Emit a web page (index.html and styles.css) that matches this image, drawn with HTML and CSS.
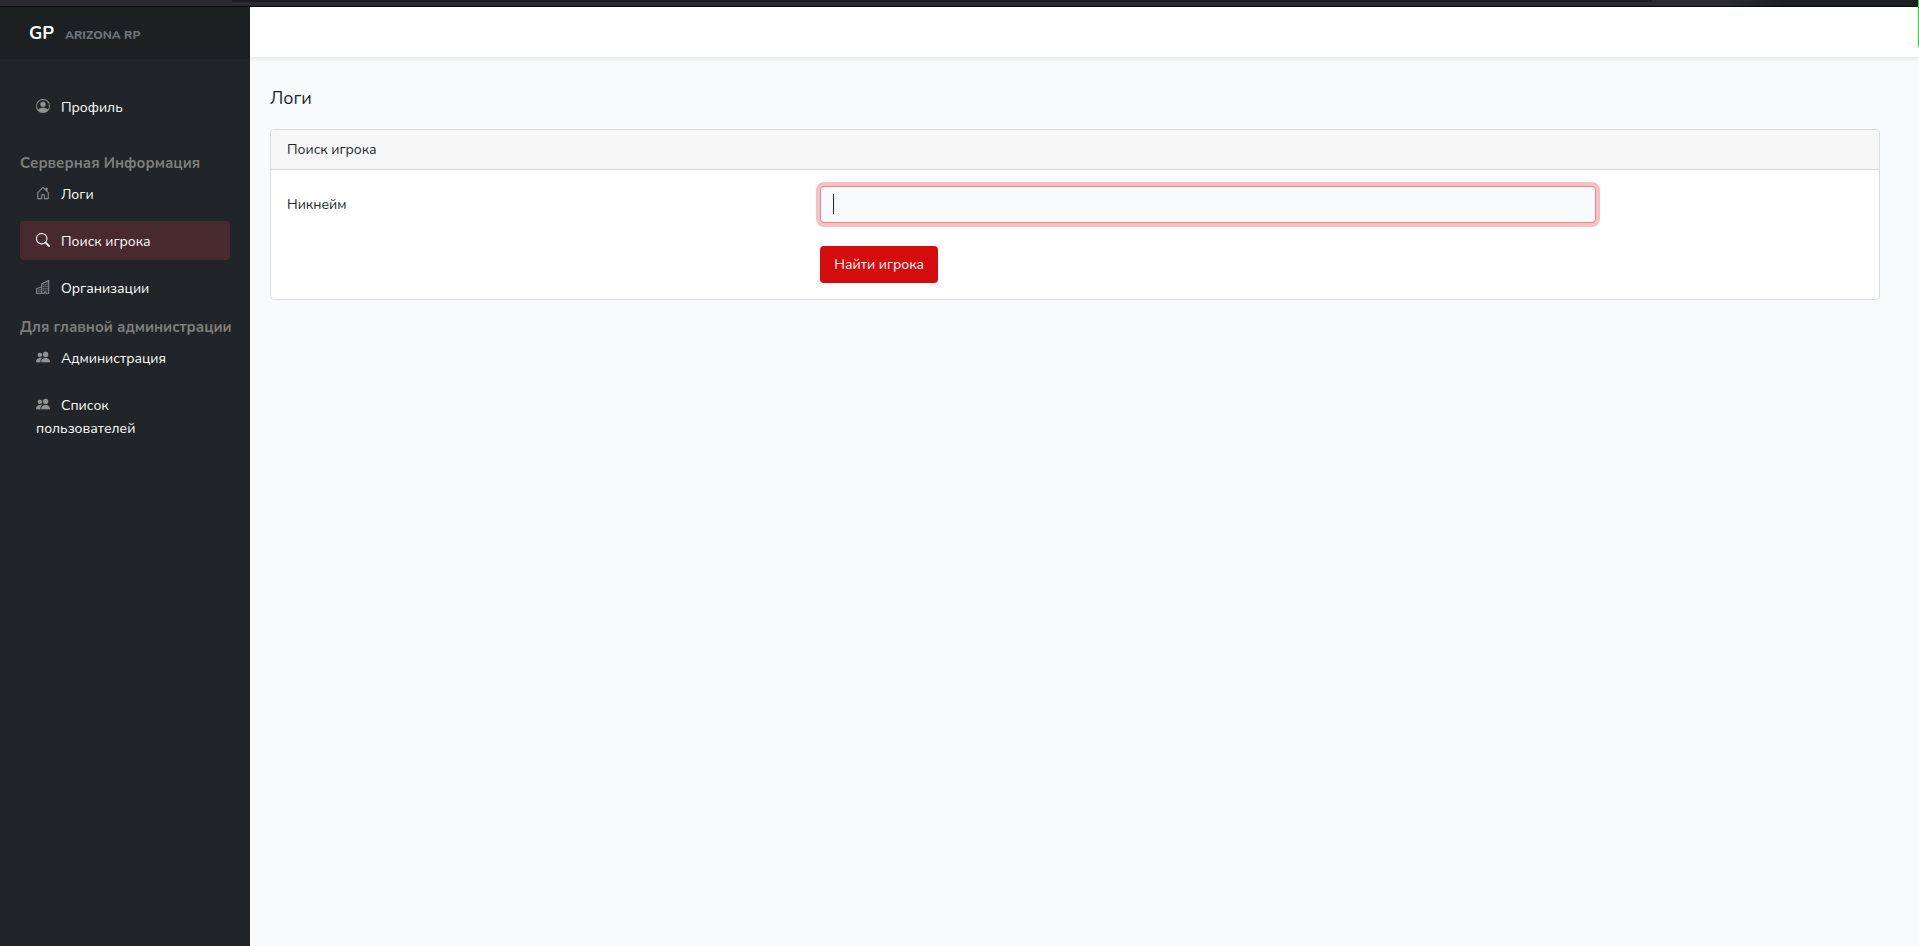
FILE: index.html
```
<!DOCTYPE html>
<html lang="ru">
<head>
    <meta charset="UTF-8">
    <meta name="viewport" content="width=device-width, initial-scale=1.0">
    <title>Логи</title>
    <link rel="stylesheet" href="styles.css">
</head>
<body>
    <div class="window-bar">
        <div class="window-tabs"></div>
    </div>
    <div class="window-edge"></div>

    <div class="layout">
        <aside class="sidebar">
            <a class="sidebar-brand" href="/">
                <span class="brand-name">GP</span>
                <span class="brand-server">ARIZONA RP</span>
            </a>
            <nav class="sidebar-nav">
                <a class="nav-link nav-profile" href="/profile"><svg class="nav-icon" viewBox="0 0 16 16"><path d="M11 6a3 3 0 1 1-6 0 3 3 0 0 1 6 0z"/><path fill-rule="evenodd" d="M0 8a8 8 0 1 1 16 0A8 8 0 0 1 0 8zm8-7a7 7 0 0 0-5.468 11.37C3.242 11.226 4.805 10 8 10s4.757 1.225 5.468 2.37A7 7 0 0 0 8 1z"/></svg>Профиль</a>

                <div class="nav-title">Серверная Информация</div>
                <a class="nav-link" href="/logs"><svg class="nav-icon" viewBox="0 0 16 16"><path fill-rule="evenodd" d="M7.646 1.146a.5.5 0 0 1 .708 0l6 6a.5.5 0 0 1 .146.354v7a.5.5 0 0 1-.5.5H9.500a.5.5 0 0 1-.5-.5v-4H7v4a.5.5 0 0 1-.5.5H2a.5.5 0 0 1-.5-.5v-7a.5.5 0 0 1 .146-.354l6-6zM2.500 7.707V14H6v-4a.5.5 0 0 1 .5-.5h3a.5.5 0 0 1 .5.5v4h3.500V7.707L8 2.207l-5.500 5.500z"/><path fill-rule="evenodd" d="M13 2.500V6l-2-2V2.500a.5.5 0 0 1 .5-.5h1a.5.5 0 0 1 .5.5z"/></svg>Логи</a>
                <a class="nav-link active" href="/search"><svg class="nav-icon" viewBox="0 0 16 16"><path d="M11.742 10.344a6.500 6.500 0 1 0-1.397 1.398h-.001c.03.04.062.078.098.115l3.850 3.850a1 1 0 0 0 1.415-1.414l-3.850-3.850a1.007 1.007 0 0 0-.115-.1zM12 6.500a5.500 5.500 0 1 1-11 0 5.500 5.500 0 0 1 11 0z"/></svg>Поиск игрока</a>
                <a class="nav-link" href="/organizations"><svg class="nav-icon" viewBox="0 0 16 16"><path fill-rule="evenodd" d="M14.763.075A.5.5 0 0 1 15 .5v15a.5.5 0 0 1-.5.5h-3a.5.5 0 0 1-.5-.5V14h-1v1.500a.5.5 0 0 1-.5.5h-9a.5.5 0 0 1-.5-.5V10a.5.5 0 0 1 .342-.474L6 7.640V4.500a.5.5 0 0 1 .276-.447l8-4a.5.5 0 0 1 .487.022zM6 8.694 1 10.360V15h5V8.694zM7 15h2v-1.500a.5.5 0 0 1 .5-.5h2a.5.5 0 0 1 .5.5V15h2V1.309l-7 3.500V15z"/><path d="M2 11h1v1H2v-1zm2 0h1v1H4v-1zm-2 2h1v1H2v-1zm2 0h1v1H4v-1zm4-4h1v1H8V9zm2 0h1v1h-1V9zm-2 2h1v1H8v-1zm2 0h1v1h-1v-1zm2-2h1v1h-1V9zm0 2h1v1h-1v-1zM8 7h1v1H8V7zm2 0h1v1h-1V7zm2 0h1v1h-1V7zM8 5h1v1H8V5zm2 0h1v1h-1V5zm2 0h1v1h-1V5zm0-2h1v1h-1V3z"/></svg>Организации</a>

                <div class="nav-title">Для главной администрации</div>
                <a class="nav-link" href="/admins"><svg class="nav-icon" viewBox="0 0 16 16"><path d="M7 14s-1 0-1-1 1-4 5-4 5 3 5 4-1 1-1 1H7zm4-6a3 3 0 1 0 0-6 3 3 0 0 0 0 6z"/><path fill-rule="evenodd" d="M5.216 14A2.238 2.238 0 0 1 5 13c0-1.355.68-2.750 1.936-3.720A6.325 6.325 0 0 0 5 9c-4 0-5 3-5 4s1 1 1 1h4.216z"/><path d="M4.500 8a2.500 2.500 0 1 0 0-5 2.500 2.500 0 0 0 0 5z"/></svg>Администрация</a>
                <a class="nav-link" href="/users"><svg class="nav-icon" viewBox="0 0 16 16"><path d="M7 14s-1 0-1-1 1-4 5-4 5 3 5 4-1 1-1 1H7zm4-6a3 3 0 1 0 0-6 3 3 0 0 0 0 6z"/><path fill-rule="evenodd" d="M5.216 14A2.238 2.238 0 0 1 5 13c0-1.355.68-2.750 1.936-3.720A6.325 6.325 0 0 0 5 9c-4 0-5 3-5 4s1 1 1 1h4.216z"/><path d="M4.500 8a2.500 2.500 0 1 0 0-5 2.500 2.500 0 0 0 0 5z"/></svg>Список пользователей</a>
            </nav>
        </aside>

        <div class="page">
            <header class="topbar"></header>
            <main class="content">
                <h1 class="page-title">Логи</h1>
                <section class="card">
                    <div class="card-header">Поиск игрока</div>
                    <form class="card-body">
                        <label class="form-label" for="nickname">Никнейм</label>
                        <div class="form-field">
                            <input class="form-control" id="nickname" name="nickname" type="text" autocomplete="off" autofocus>
                            <span class="caret"></span>
                        </div>
                        <button class="btn" type="submit">Найти игрока</button>
                    </form>
                </section>
            </main>
        </div>
    </div>
</body>
</html>
```

FILE: styles.css
```
* {
    box-sizing: border-box;
}
body {
    margin: 0;
    min-height: 100vh;
    display: flex;
    flex-direction: column;
    font-family: "Nunito", "Open Sans", "Noto Sans", sans-serif;
    font-size: 14px;
    line-height: 23px;
    color: #212529;
    background-color: #f8fafc;
}

.window-bar {
    height: 7px;
    padding: 0 267px 0 232px;
    background: linear-gradient(to right, #2b2a33 90%, #1d1f23 93%);
    border-bottom: 1px solid #0c0c0d;
}
.window-tabs {
    height: 2px;
    background-color: #1c1b22;
}
.window-edge {
    position: absolute;
    top: 0;
    right: 0;
    width: 1px;
    height: 47px;
    background-color: #00ff00;
}

.layout {
    flex: 1;
    display: flex;
}

/* Sidebar */
.sidebar {
    width: 250px;
    flex-shrink: 0;
    background-color: #212529;
}
.sidebar-brand {
    display: flex;
    align-items: baseline;
    gap: 11px;
    height: 52px;
    padding: 0 29px;
    line-height: 52px;
    background-color: #1d2023;
    text-decoration: none;
}
.brand-name {
    font-size: 18px;
    font-weight: 700;
    color: #fff;
}
.brand-server {
    font-size: 12px;
    font-weight: 800;
    color: #6c757d;
}
.sidebar-nav {
    padding: 28px 20px;
}
.nav-title {
    padding-top: 2px;
    font-size: 15px;
    font-weight: 700;
    line-height: 21px;
    color: #7d7e7e;
    white-space: nowrap;
}
.nav-link {
    display: block;
    margin-bottom: 8px;
    padding: 9px 20px 7px 16px;
    border-radius: 4px;
    color: #fff;
    text-decoration: none;
}
.nav-profile {
    margin-bottom: 25px;
}
.nav-icon {
    width: 14px;
    height: 14px;
    margin-right: 11px;
    vertical-align: -1px;
    fill: #909294;
    stroke: #909294;
    stroke-width: 0.2;
}
.active {
    background-color: #48292e;
}
.active .nav-icon {
    fill: #fff;
    stroke: #fff;
}

/* Content */
.page {
    flex: 1;
}
.topbar {
    height: 50px;
    background-color: #fff;
    box-shadow: 0 2px 4px rgba(0, 0, 0, 0.08);
}
.content {
    padding: 30px 39px 30px 20px;
}
.page-title {
    margin: 0 0 19px;
    font-size: 18px;
    font-weight: 400;
    line-height: 23px;
}
.card {
    border: 1px solid #dcdddd;
    border-radius: 4px;
    background-color: #fff;
}
.card-header {
    padding: 8px 16px;
    border-bottom: 1px solid #d8d9d9;
    border-radius: 3px 3px 0 0;
    background-color: #f7f7f7;
}
.card-body {
    display: grid;
    grid-template-columns: repeat(12, 1fr);
    gap: 23px 24px;
    padding: 16px;
}
.form-label {
    grid-column: span 4;
    padding: 7px 0;
}
.form-field {
    grid-column: span 6;
    position: relative;
}
.form-control {
    display: block;
    width: 100%;
    height: 37px;
    padding: 6px 12px;
    border: 1px solid #ea8686;
    border-radius: 4px;
    outline: 0;
    font: inherit;
    color: #212529;
    caret-color: transparent;
    background-color: #f8fafc;
    box-shadow: 0 0 0 4px #f5c2c4;
}
.caret {
    position: absolute;
    top: 8px;
    left: 13px;
    width: 1px;
    height: 20px;
    background-color: #212529;
}
.btn {
    grid-column: 5 / span 6;
    justify-self: start;
    height: 37px;
    padding: 6px 14px;
    border: 0;
    border-radius: 4px;
    font: inherit;
    color: #fff;
    background-color: #d50c0d;
}
```
